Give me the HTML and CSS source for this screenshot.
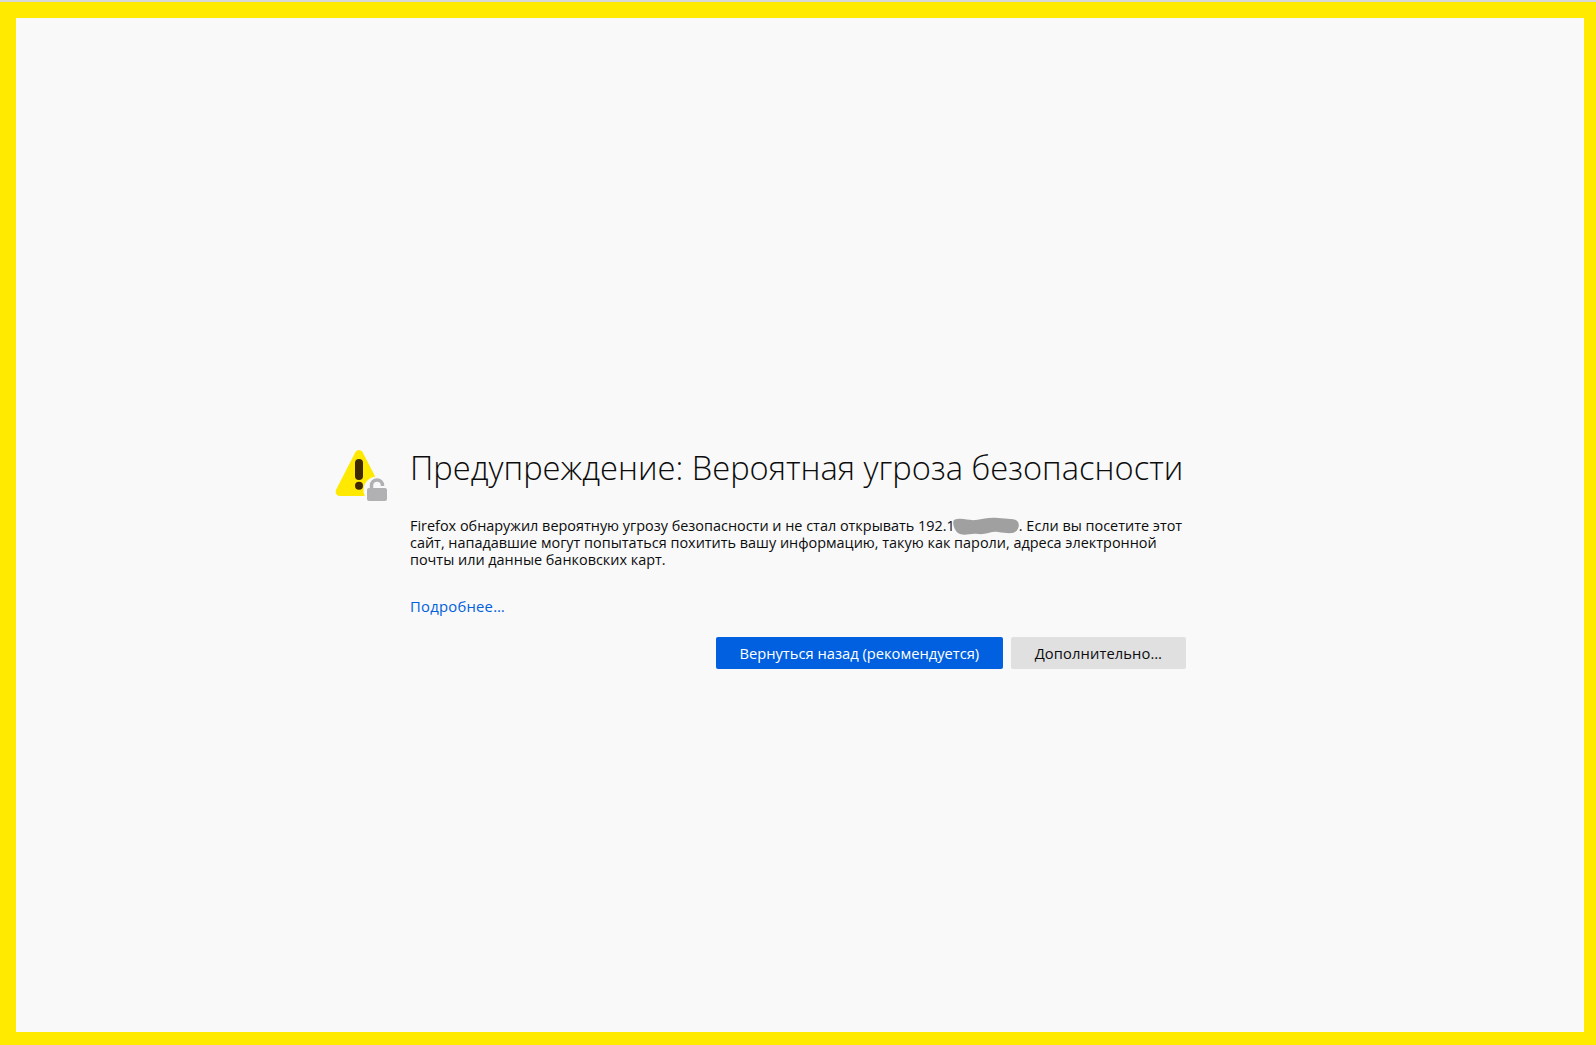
FILE: index.html
```html
<!DOCTYPE html>
<html lang="ru">
<head>
<meta charset="utf-8">
<title>Предупреждение: Вероятная угроза безопасности</title>
<link rel="stylesheet" href="styles.css">
</head>
<body>
<div class="topline"></div>
<main class="frame">
  <div class="error">
    <svg class="icon" width="54" height="56" viewBox="0 0 54 56" aria-hidden="true">
      <path d="M24 4c-1.600 0-3 .9-3.800 2.400L1.200 43.500c-1.500 3 .5 6.500 3.600 6.500h38.400c3.100 0 5.100-3.500 3.600-6.500L27.800 6.400C27 4.900 25.600 4 24 4z" fill="#ffe900"/>
      <rect x="20" y="13" width="8" height="21" rx="4" fill="#3e2800"/>
      <circle cx="24" cy="39.700" r="4" fill="#3e2800"/>
      <circle cx="42" cy="44" r="13.500" fill="#f9f9f9"/>
      <path d="M36.500 43v-3.500a5.500 5.500 0 0 1 11 0v.5" fill="none" stroke="#b1b1b3" stroke-width="3.500"/>
      <rect x="32" y="42" width="20" height="13" rx="2" fill="#b1b1b3"/>
    </svg>
    <div class="content">
      <h1 class="title">Предупреждение: Вероятная угроза безопасности</h1>
      <p class="desc">Firefox обнаружил вероятную угрозу безопасности и не стал открывать 192.1<span class="redact"><svg class="blob" width="66" height="18" viewBox="0 0 66 18" aria-hidden="true"><path d="M1 3c8-3 14 1 22 0s13-3 22-2 18 0 20 4 0 8-3 10-10 1-17 0-12 3-20 2-12 2-18 0S-1 5 1 3z" fill="#a0a0a0"/></svg></span>. Если вы посетите этот сайт, нападавшие могут попытаться похитить вашу информацию, такую как пароли, адреса электронной почты или данные банковских карт.</p>
      <a class="more" href="#">Подробнее…</a>
      <div class="actions">
        <button class="btn primary" type="button">Вернуться назад (рекомендуется)</button>
        <button class="btn secondary" type="button">Дополнительно…</button>
      </div>
    </div>
  </div>
</main>
</body>
</html>
```
FILE: styles.css
```css
* { box-sizing: border-box; }
html, body { margin: 0; height: 100%; }
body {
  width: 1596px;
  height: 1045px;
  overflow: hidden;
  background: #ffea00;
  font-family: "Open Sans", "Noto Sans", sans-serif;
  color: #15141a;
}
.topline { height: 2px; background: #d8d8d8; }
.frame {
  margin: 16px 12px 13px 16px;
  height: 1014px;
  background: #f9f9f9;
  padding: 428px 0 0 319px;
}
.error { display: flex; gap: 21px; width: 852px; }
.icon { flex: none; }
.content { width: 776px; }
.title {
  margin: 0;
  font-size: 32.66px;
  font-weight: 300;
  line-height: 44px;
  white-space: nowrap;
  color: #0c0c0d;
}
.desc {
  margin: 27px 0 0;
  font-size: 14.43px;
  line-height: 17px;
  color: #0c0c0d;
}
.redact { display: inline-block; position: relative; width: 64px; height: 1px; }
.blob { position: absolute; left: -2px; top: -13px; }
.more {
  display: block;
  margin-top: 28px;
  font-size: 14.8px;
  line-height: 20px;
  letter-spacing: .25px;
  color: #0060df;
  text-decoration: none;
}
.actions { display: flex; justify-content: flex-end; gap: 8px; margin-top: 21px; }
.btn {
  height: 32px;
  padding: 0 24px;
  border: 0;
  border-radius: 2px;
  background: #e0e0e1;
  color: #0c0c0d;
  font: 400 14.7px "Open Sans", "Noto Sans", sans-serif;
}
.primary { padding: 0 23.5px; background: #0060df; color: #fff; }
.secondary { letter-spacing: .12px; }
```
